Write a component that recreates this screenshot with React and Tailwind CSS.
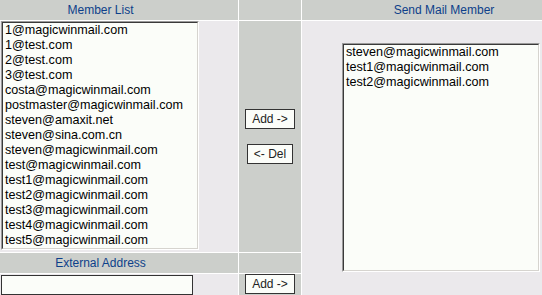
import React from 'react';

const members = [
  '1@magicwinmail.com',
  '1@test.com',
  '2@test.com',
  '3@test.com',
  'costa@magicwinmail.com',
  'postmaster@magicwinmail.com',
  'steven@amaxit.net',
  'steven@sina.com.cn',
  'steven@magicwinmail.com',
  'test@magicwinmail.com',
  'test1@magicwinmail.com',
  'test2@magicwinmail.com',
  'test3@magicwinmail.com',
  'test4@magicwinmail.com',
  'test5@magicwinmail.com',
];

const selected = ['steven@magicwinmail.com', 'test1@magicwinmail.com', 'test2@magicwinmail.com'];

function ListBox({ items }) {
  return (
    <div className="w-[198px] h-[229px] border-t border-l border-t-[#9a9a9a] border-l-[#9a9a9a] border-b border-r border-b-white border-r-white">
      <div className="h-full border-t border-l border-t-[#3a3a3a] border-l-[#3a3a3a] border-b border-r border-b-[#d6d4cf] border-r-[#d6d4cf] bg-[#fbfdf9] overflow-hidden">
        {items.map((m) => (
          <div key={m} className="h-[15px] leading-[15px] pl-[2px] text-[12.6px] text-black whitespace-nowrap">
            {m}
          </div>
        ))}
      </div>
    </div>
  );
}

function Btn({ children }) {
  return (
    <button className="h-[20px] px-[6px] border border-[#333] bg-[#fbfdf9] text-[12px] leading-none text-[#222]">
      {children}
    </button>
  );
}

export default function App() {
  return (
    <div className="w-[542px] h-[295px] overflow-hidden" style={{ fontFamily: '"Liberation Sans", Arial, sans-serif' }}>
      <div className="grid grid-cols-[238px_62px_284px] grid-rows-[20px_231px_20px_24px] gap-px bg-white w-[586px]">
        <div className="bg-[#cccfcb] flex items-center">
          <div className="w-[201px] text-center text-[12px] text-[#0d3f8a]">Member List</div>
        </div>
        <div className="bg-[#cccfcb]" />
        <div className="bg-[#cccfcb] flex items-center justify-center text-[12px] text-[#0d3f8a]">
          Send Mail Member
        </div>

        <div className="bg-[#ebe9ec] pl-px">
          <ListBox items={members} />
        </div>
        <div className="bg-[#cccfcb] flex flex-col items-center justify-center gap-[15px]">
          <Btn>Add -&gt;</Btn>
          <Btn>&lt;- Del</Btn>
        </div>
        <div className="bg-[#ebe9ec] row-span-3 pt-[22px] pl-[40px]">
          <ListBox items={selected} />
        </div>

        <div className="bg-[#cccfcb] flex items-center">
          <div className="w-[201px] text-center text-[12px] text-[#0d3f8a]">External Address</div>
        </div>
        <div className="bg-[#cccfcb]" />

        <div className="bg-[#ebe9ec] pl-px pt-px">
          <input className="block w-[192px] h-[20px] border border-[#333] bg-[#fbfdf9] outline-none text-[12px] px-1" />
        </div>
        <div className="bg-[#cccfcb] flex justify-center">
          <Btn>Add -&gt;</Btn>
        </div>
      </div>
    </div>
  );
}
